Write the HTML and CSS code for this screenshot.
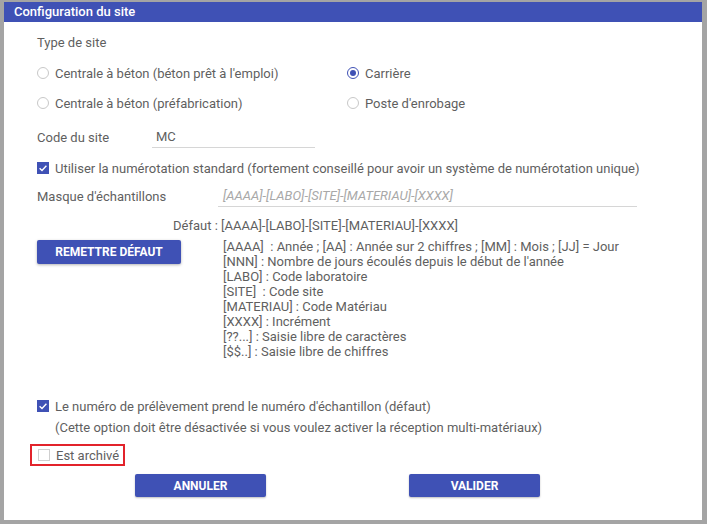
FILE: index.html
```html
<!DOCTYPE html>
<html lang="fr">
<head>
<meta charset="utf-8">
<title>Configuration du site</title>
<link rel="stylesheet" href="styles.css">
</head>
<body>
<div class="backdrop">
  <div class="dialog">
    <div class="dialog-title">Configuration du site</div>
    <div class="dialog-body">
      <div class="row section-label">Type de site</div>
      <div class="row radio-row">
        <label class="radio-item col1"><span class="radio"></span>Centrale à béton (béton prêt à l'emploi)</label>
        <label class="radio-item"><span class="radio checked"></span>Carrière</label>
      </div>
      <div class="row radio-row">
        <label class="radio-item col1"><span class="radio"></span>Centrale à béton (préfabrication)</label>
        <label class="radio-item"><span class="radio"></span>Poste d'enrobage</label>
      </div>
      <div class="row code-row">
        <span class="field-label code-label">Code du site</span>
        <span class="input code-input">MC</span>
      </div>
      <div class="row check-row">
        <span class="checkbox checked"><svg viewBox="0 0 12 12" width="12" height="12"><path d="M2.6 6.2 L5 8.4 L9.4 3.8" fill="none" stroke="#fff" stroke-width="1.4"/></svg></span>
        <span>Utiliser la numérotation standard (fortement conseillé pour avoir un système de numérotation unique)</span>
      </div>
      <div class="row mask-row">
        <span class="field-label mask-label">Masque d'échantillons</span>
        <span class="input mask-input">[AAAA]-[LABO]-[SITE]-[MATERIAU]-[XXXX]</span>
      </div>
      <div class="row default-row">Défaut : [AAAA]-[LABO]-[SITE]-[MATERIAU]-[XXXX]</div>
      <div class="help-block">
        <div class="reset-col"><button class="btn btn-reset">REMETTRE DÉFAUT</button></div>
        <div class="help-text">
          <div>[AAAA]&nbsp; : Année ; [AA] : Année sur 2 chiffres ; [MM] : Mois ; [JJ] = Jour</div>
          <div>[NNN] : Nombre de jours écoulés depuis le début de l'année</div>
          <div>[LABO] : Code laboratoire</div>
          <div>[SITE]&nbsp; : Code site</div>
          <div>[MATERIAU] : Code Matériau</div>
          <div>[XXXX] : Incrément</div>
          <div>[??...] : Saisie libre de caractères</div>
          <div>[$$..] : Saisie libre de chiffres</div>
        </div>
      </div>
      <div class="row check-row prelev-row">
        <span class="checkbox checked"><svg viewBox="0 0 12 12" width="12" height="12"><path d="M2.6 6.2 L5 8.4 L9.4 3.8" fill="none" stroke="#fff" stroke-width="1.4"/></svg></span>
        <span>Le numéro de prélèvement prend le numéro d'échantillon (défaut)</span>
      </div>
      <div class="row note-row">(Cette option doit être désactivée si vous voulez activer la réception multi-matériaux)</div>
      <div class="archive-wrap">
        <div class="archive-box">
          <span class="checkbox"></span>
          <span>Est archivé</span>
        </div>
      </div>
      <div class="actions">
        <button class="btn btn-action">ANNULER</button>
        <button class="btn btn-action">VALIDER</button>
      </div>
    </div>
  </div>
</div>
</body>
</html>
```
FILE: styles.css
```css
html, body {
  margin: 0;
  padding: 0;
}
body {
  background: #a4a4a4;
  font-family: Roboto, "Noto Sans", Arial, sans-serif;
  font-size: 13px;
  color: #5f5f5f;
}
.backdrop {
  width: 707px;
  height: 524px;
  padding: 2px 5px 4px 4px;
  box-sizing: border-box;
}
.dialog {
  background: #fff;
  height: 518px;
  display: flex;
  flex-direction: column;
}
.dialog-title {
  background: #3f51b5;
  color: #fff;
  height: 20px;
  line-height: 20px;
  padding-left: 10px;
  font-size: 13px;
  font-weight: 500;
}
.dialog-body {
  padding-left: 33px;
  display: flex;
  flex-direction: column;
}
.row {
  display: flex;
  align-items: center;
  height: 20px;
  white-space: nowrap;
}
.section-label {
  margin-top: 10px;
}
.radio-row {
  margin-top: 11px;
  height: 20px;
}
.radio-row + .radio-row {
  margin-top: 10px;
}
.radio-item {
  display: flex;
  align-items: center;
}
.col1 {
  width: 310px;
}
.radio {
  width: 12px;
  height: 12px;
  border: 1px solid #c8c8c8;
  border-radius: 50%;
  box-sizing: border-box;
  margin-right: 6px;
  position: relative;
  flex: none;
}
.radio.checked {
  border: 1px solid #3f51b5;
}
.radio.checked::after {
  content: "";
  position: absolute;
  left: 2px;
  top: 2px;
  width: 6px;
  height: 6px;
  border-radius: 50%;
  background: #3f51b5;
}
.code-row {
  margin-top: 14px;
  height: 20px;
}
.field-label {
  flex: none;
}
.code-label {
  width: 115px;
}
.input {
  height: 20px;
  line-height: 20px;
  border-bottom: 1px solid #d6d6d6;
  box-sizing: content-box;
}
.code-input {
  width: 159px;
  padding-left: 4px;
  color: #606060;
}
.check-row {
  margin-top: 11px;
}
.checkbox {
  width: 12px;
  height: 12px;
  border: 1px solid #cfcfcf;
  box-sizing: border-box;
  margin-right: 6px;
  flex: none;
  display: flex;
}
.checkbox.checked {
  background: #3f51b5;
  border-color: #3f51b5;
}
.checkbox.checked svg {
  margin: -1px;
}
.mask-row {
  margin-top: 8px;
}
.mask-label {
  width: 181px;
}
.mask-input {
  width: 414px;
  padding-left: 5px;
  font-style: italic;
  color: #a8a8a8;
}
.default-row {
  margin-top: 10px;
  padding-left: 136px;
  height: 18px;
}
.help-block {
  display: flex;
}
.reset-col {
  width: 186px;
  flex: none;
  padding-top: 6px;
}
.btn {
  font-family: Roboto, "Noto Sans", Arial, sans-serif;
  border: 0;
  border-radius: 2px;
  background: #3f51b5;
  color: #fff;
  font-weight: 700;
  font-size: 12px;
  cursor: pointer;
  padding: 0;
}
.btn-reset {
  width: 144px;
  height: 24px;
  box-shadow: 0 1px 3px rgba(0,0,0,0.3);
}
.help-text {
  line-height: 15px;
  white-space: nowrap;
  padding-top: 5px;
}
.prelev-row {
  margin-top: 37px;
}
.note-row {
  margin-top: 1px;
  padding-left: 18px;
}
.archive-wrap {
  margin-top: 7px;
  margin-left: -7px;
  display: flex;
}
.archive-box {
  border: 2px solid #e2232b;
  width: 85px;
  height: 18px;
  display: flex;
  align-items: center;
  padding-left: 6px;
  white-space: nowrap;
}
.actions {
  display: flex;
  margin-top: 8px;
  padding-left: 98px;
  gap: 143px;
}
.btn-action {
  width: 131px;
  height: 23px;
  box-shadow: 0 1px 2px rgba(0,0,0,0.25);
}
```
